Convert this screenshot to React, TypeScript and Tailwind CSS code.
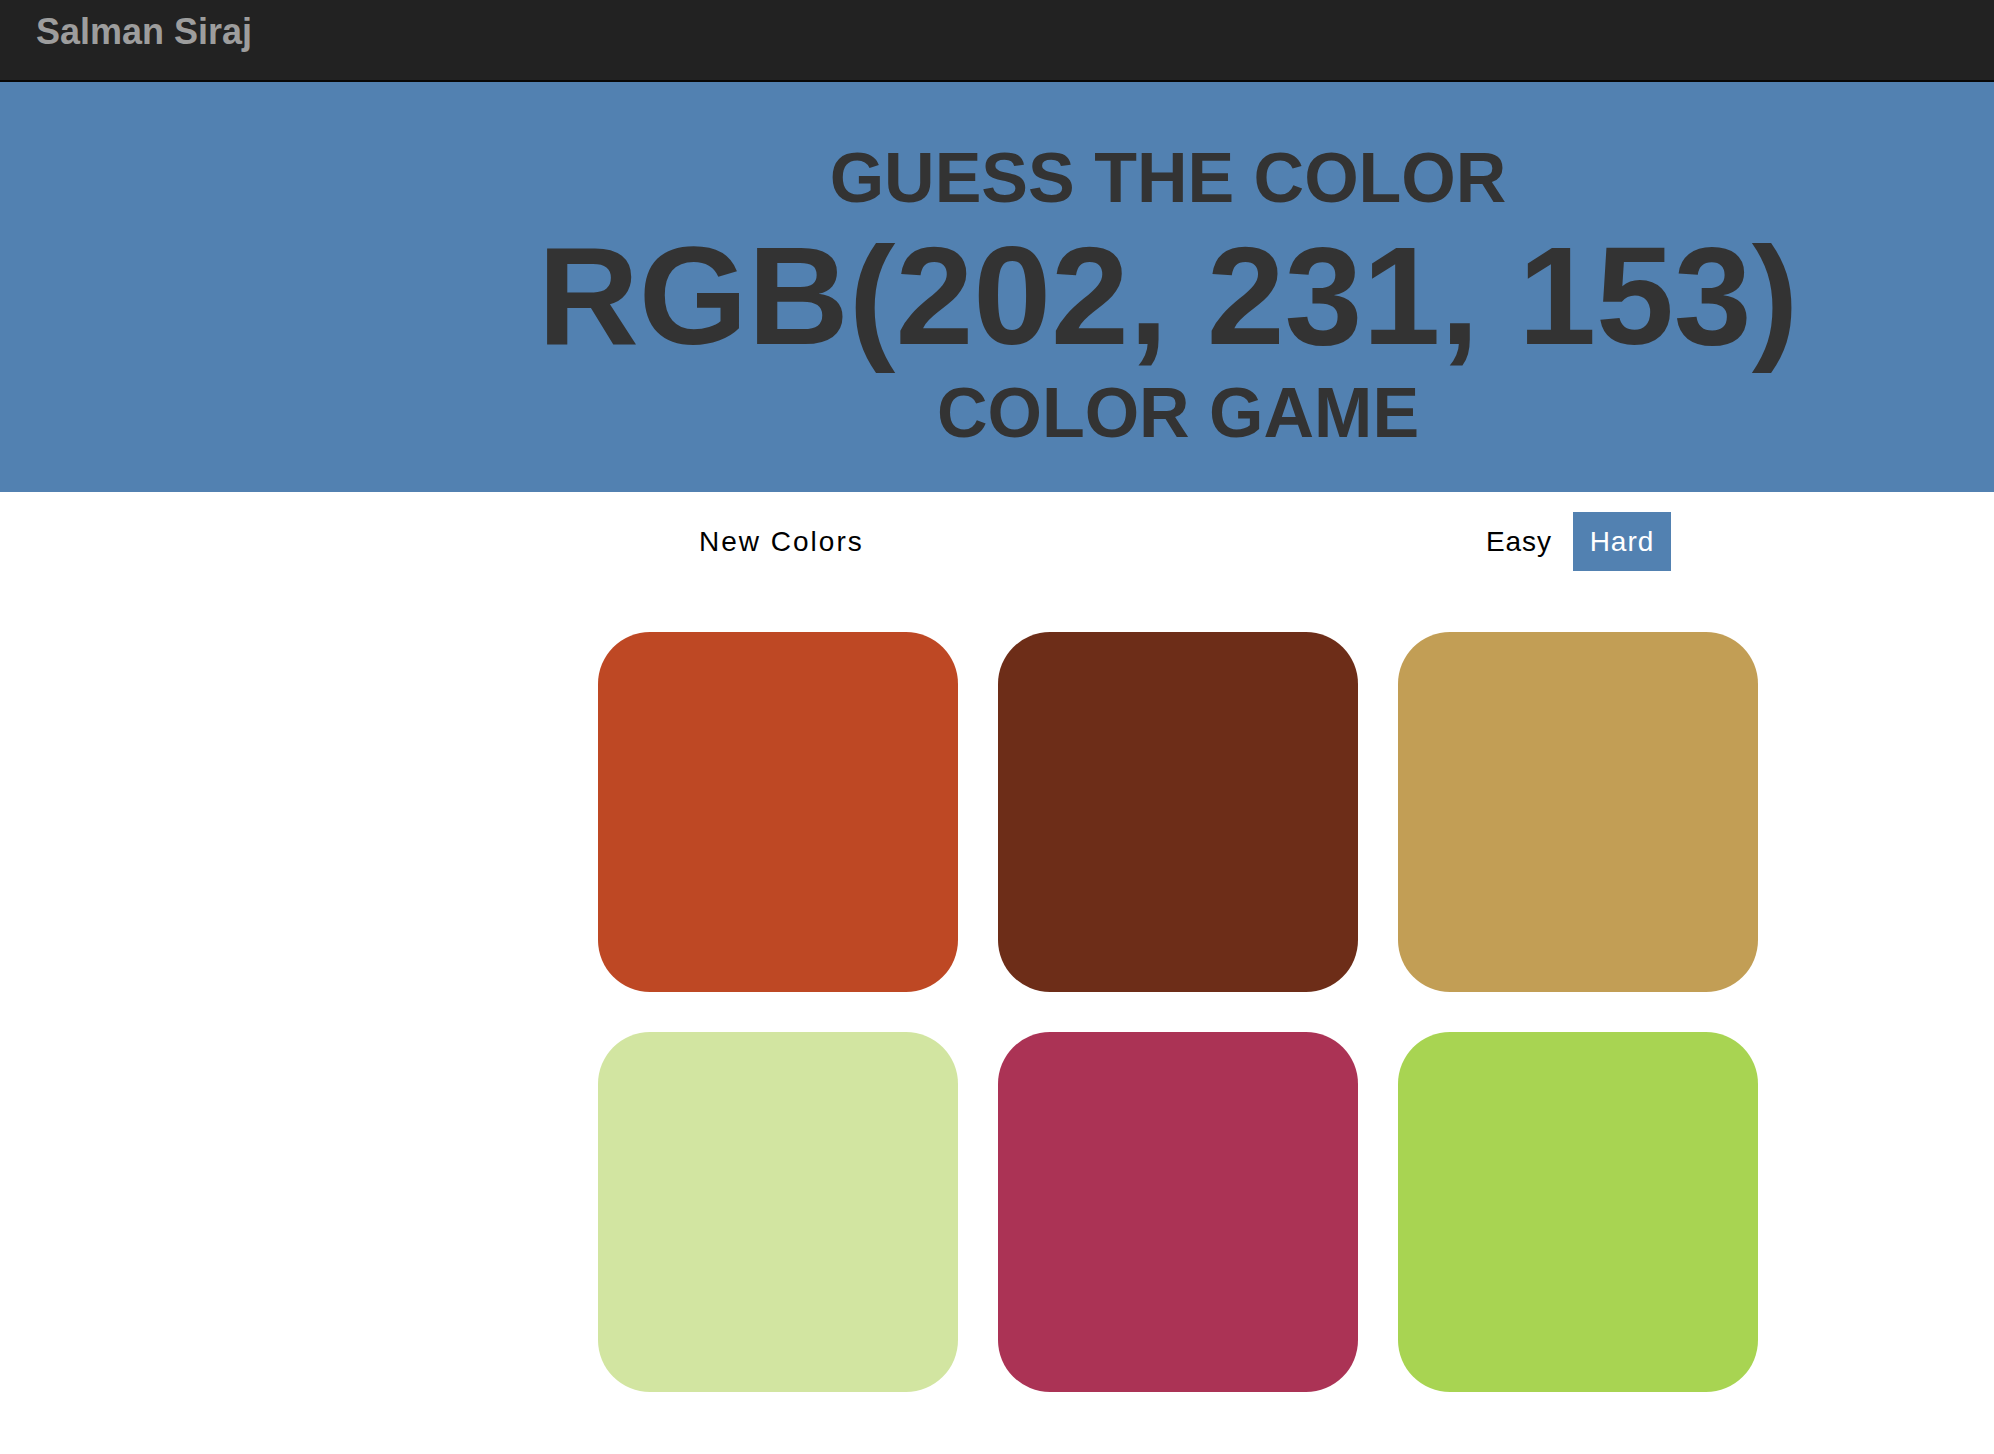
import { useState } from "react";

const tiles = ["#be4824", "#6d2d18", "#c29e55", "#d2e5a1", "#ab3355", "#a8d452"];

export default function App() {
    const [mode, setMode] = useState<"easy" | "hard">("hard");

    return (
        <div className="min-h-screen bg-white font-['Liberation_Sans',Arial,sans-serif]">
            {/* navbar */}
            <nav className="h-[82px] bg-[#222222] border-b-2 border-[#080808] pl-[36px] pt-[11px]">
                <span className="text-[36px] font-bold text-[#9d9d9d] leading-[41px]">Salman Siraj</span>
            </nav>

            {/* header */}
            <header className="bg-[#5281b1] pt-[57px] pb-[40px] pl-[342px] text-center text-[#333333] font-bold">
                <h2 className="text-[70px] leading-[78px]">GUESS THE COLOR</h2>
                <h1 className="text-[140px] leading-[157px]">RGB(202, 231, 153)</h1>
                <h2 className="text-[70px] leading-[78px] pl-[20px]">COLOR GAME</h2>
            </header>

            <div className="pl-[362px]">
                {/* controls */}
                <div className="w-[986px] mx-auto pt-[20px] flex items-center justify-between">
                    <button className="h-[59px] px-[14px] text-[28px] tracking-[2px] text-black">New Colors</button>
                    <div className="flex items-center gap-[5px]">
                        <button
                            onClick={() => setMode("easy")}
                            className={mode === "easy" ? "h-[59px] w-[98px] text-[28px] tracking-[1px] bg-[#5281b1] text-white" : "h-[59px] w-[98px] text-[28px] tracking-[1px] text-black"}
                        >
                            Easy
                        </button>
                        <button
                            onClick={() => setMode("hard")}
                            className={mode === "hard" ? "h-[59px] w-[98px] text-[28px] tracking-[1px] bg-[#5281b1] text-white" : "h-[59px] w-[98px] text-[28px] tracking-[1px] text-black"}
                        >
                            Hard
                        </button>
                    </div>
                </div>

                {/* squares */}
                <div className="w-[1160px] mx-auto mt-[61px] grid grid-cols-3 gap-[40px] pb-[62px]">
                    {tiles.map((c) => (
                        <div key={c} className="h-[360px] rounded-[52px]" style={{ backgroundColor: c }} />
                    ))}
                </div>
            </div>
        </div>
    );
}
